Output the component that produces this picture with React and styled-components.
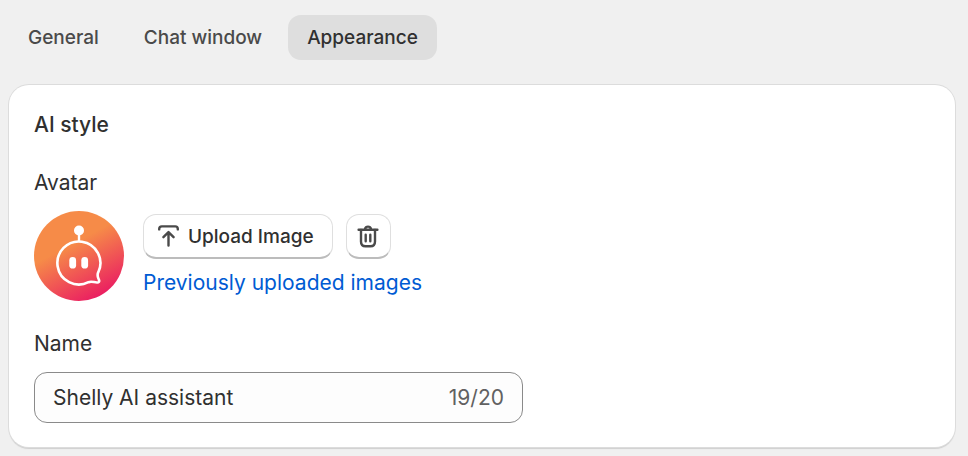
import React, { useState } from 'react';
import styled, { createGlobalStyle } from 'styled-components';

const GlobalStyle = createGlobalStyle`
  * {
    box-sizing: border-box;
  }

  body {
    margin: 0;
    background-color: #f0f0f0;
    color: #303030;
    font-family: Inter, sans-serif;
    font-size: 21px;
    line-height: 30px;
  }

  button, input {
    font-family: inherit;
    color: inherit;
  }
`;

// Styled components
const Page = styled.main`
  padding: 15px 13px 8px 9px;
`;

const TabList = styled.div`
  display: flex;
  gap: 7px;
  margin-bottom: 25px;
`;

const Tab = styled.button`
  height: 45px;
  padding: 0 19px;
  border: none;
  border-radius: 13px;
  background-color: ${(props) => (props.$active ? '#dedede' : 'transparent')};
  color: ${(props) => (props.$active ? '#303030' : '#4a4a4a')};
  font-size: 19px;
  font-weight: 550;
  cursor: pointer;
`;

const Card = styled.section`
  display: flex;
  flex-direction: column;
  gap: 28px;
  padding: 25px 25px 24px;
  border-radius: 20px;
  background-color: #fff;
  box-shadow: 0 0 0 1px #dcdcdc, 0 2px 1px #cfcfcf;
`;

const CardTitle = styled.h2`
  margin: 0;
  font-size: 21px;
  font-weight: 550;
`;

const Field = styled.div`
  display: flex;
  flex-direction: column;
  gap: 13px;
`;

const Label = styled.label`
  align-self: flex-start;
`;

const AvatarRow = styled.div`
  display: flex;
  align-items: center;
  gap: 19px;
`;

const AvatarActions = styled.div`
  display: flex;
  flex-direction: column;
  align-items: flex-start;
  gap: 9px;
`;

const ButtonRow = styled.div`
  display: flex;
  gap: 13px;
`;

const Button = styled.button`
  display: flex;
  align-items: center;
  justify-content: center;
  gap: 9px;
  height: 45px;
  min-width: 45px;
  padding: ${(props) => (props.$iconOnly ? '0' : '0 18px 0 14px')};
  border: 1px solid #dfdfdf;
  border-bottom: 2px solid #bcbcbc;
  border-radius: 13px;
  background-color: #fff;
  font-size: 19px;
  font-weight: 550;
  cursor: pointer;
`;

const Link = styled.a`
  color: #005bd3;
  text-decoration: none;
`;

const InputBox = styled.div`
  display: flex;
  align-items: center;
  width: 489px;
  max-width: 100%;
  height: 51px;
  padding: 0 18px;
  border: 1px solid #8a8a8a;
  border-radius: 13px;
  background-color: #fdfdfd;
`;

const Input = styled.input`
  flex: 1;
  min-width: 0;
  padding: 0;
  border: none;
  outline: none;
  background: transparent;
  font-size: 21px;
`;

const Counter = styled.span`
  color: #616161;
`;

const Avatar = () => (
  <svg width="90" height="90" viewBox="0 0 90 90" role="img" aria-label="Shelly">
    <defs>
      <linearGradient id="avatarFill" x1="0.26" y1="0.06" x2="0.74" y2="0.96">
        <stop offset="0.34" stopColor="#f68b48" />
        <stop offset="1" stopColor="#ea1c62" />
      </linearGradient>
    </defs>
    <circle cx="45" cy="45" r="45" fill="url(#avatarFill)" />
    <circle cx="45" cy="19.5" r="5" fill="#fff" />
    <path d="M45 20v11" stroke="#fff" strokeWidth="2.4" />
    <path
      d="M54.5 71.2A21.5 21.5 0 1 1 64.3 61.2C62.5 64.5 64.2 66.5 65 69C65.6 70.9 64.7 71.6 63 71.5C60 71.5 57.5 69.8 54.5 71.2Z"
      fill="none"
      stroke="#fff"
      strokeWidth="2.6"
      strokeLinejoin="round"
    />
    <rect x="35.3" y="46" width="6.8" height="11.6" rx="3.4" fill="#fff" />
    <rect x="47.3" y="46" width="6.8" height="11.6" rx="3.4" fill="#fff" />
  </svg>
);

const UploadIcon = () => (
  <svg width="21" height="22" viewBox="0 0 21 22" fill="none" stroke="#4a4a4a" strokeWidth="2.4" strokeLinecap="round" strokeLinejoin="round" aria-hidden="true">
    <path d="M1.2 4.4V4Q1.2 1.4 3.8 1.4H17.2Q19.8 1.4 19.8 4V4.4" />
    <path d="M10.5 20.6V7.5M5.4 12.2L10.5 7.1L15.6 12.2" />
  </svg>
);

const TrashIcon = () => (
  <svg width="22" height="24" viewBox="0 0 22 24" fill="none" stroke="#4a4a4a" strokeWidth="2.4" strokeLinecap="round" strokeLinejoin="round" aria-hidden="true">
    <path d="M1.6 5.8H20.4M8 4.9A3.1 3.1 0 0 1 14 4.9" />
    <path d="M4 6V17.5Q4 22.3 8.5 22.3H13.5Q18 22.3 18 17.5V6M8.7 10.7V17.3M13.3 10.7V17.3" />
  </svg>
);

const tabs = ['General', 'Chat window', 'Appearance'];
const MAX_LENGTH = 20;

const App = () => {
  const [activeTab, setActiveTab] = useState('Appearance');
  const [name, setName] = useState('Shelly AI assistant');

  return (
    <Page>
      <GlobalStyle />
      <TabList role="tablist">
        {tabs.map((tab) => (
          <Tab
            key={tab}
            type="button"
            role="tab"
            aria-selected={tab === activeTab}
            $active={tab === activeTab}
            onClick={() => setActiveTab(tab)}
          >
            {tab}
          </Tab>
        ))}
      </TabList>
      <Card>
        <CardTitle>AI style</CardTitle>
        <Field>
          <Label as="span">Avatar</Label>
          <AvatarRow>
            <Avatar />
            <AvatarActions>
              <ButtonRow>
                <Button type="button">
                  <UploadIcon />
                  Upload Image
                </Button>
                <Button type="button" $iconOnly aria-label="Delete image">
                  <TrashIcon />
                </Button>
              </ButtonRow>
              <Link href="#images">Previously uploaded images</Link>
            </AvatarActions>
          </AvatarRow>
        </Field>
        <Field>
          <Label htmlFor="name">Name</Label>
          <InputBox>
            <Input
              id="name"
              type="text"
              value={name}
              maxLength={MAX_LENGTH}
              onChange={(e) => setName(e.target.value)}
            />
            <Counter>{name.length}/{MAX_LENGTH}</Counter>
          </InputBox>
        </Field>
      </Card>
    </Page>
  );
};

export default App;
